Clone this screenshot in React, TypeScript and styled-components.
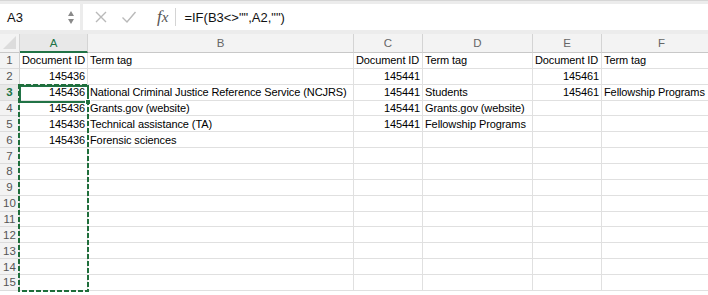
import { FC } from "react"
import styled, { createGlobalStyle } from "styled-components"

const GlobalStyle = createGlobalStyle`
	html, body {
		margin: 0;
		padding: 0;
		background: #fff;
	}
	* {
		box-sizing: border-box;
	}
`

const COLS = ["A", "B", "C", "D", "E", "F"]
const WIDTHS = [68, 266, 69, 110, 69, 120]
const NUM_ROWS = 15

type CellVal = string | number | undefined
const data: CellVal[][] = [
	["Document ID", "Term tag", "Document ID", "Term tag", "Document ID", "Term tag"],
	[145436, undefined, 145441, undefined, 145461, undefined],
	[145436, "National Criminal Justice Reference Service (NCJRS)", 145441, "Students", 145461, "Fellowship Programs"],
	[145436, "Grants.gov (website)", 145441, "Grants.gov (website)"],
	[145436, "Technical assistance (TA)", 145441, "Fellowship Programs"],
	[145436, "Forensic sciences"],
]

const App: FC = () => {
	return (
		<Window>
			<GlobalStyle />
			<FormulaBar>
				<NameBox>
					<span>A3</span>
					<Stepper>
						<Arrow $up />
						<Arrow />
					</Stepper>
				</NameBox>
				<FormulaInput>
					<ToolIcon>
						<svg width="14" height="14" viewBox="0 0 14 14">
							<path d="M2 2 L12 12 M12 2 L2 12" stroke="#b9b9b9" strokeWidth="1.4" fill="none" />
						</svg>
					</ToolIcon>
					<ToolIcon>
						<svg width="16" height="14" viewBox="0 0 16 14">
							<path d="M1.5 7.5 L6 12 L14.5 2" stroke="#b9b9b9" strokeWidth="1.4" fill="none" />
						</svg>
					</ToolIcon>
					<Fx>
						f<span>x</span>
					</Fx>
					<Divider />
					<FormulaText>=IF(B3&lt;&gt;"",A2,"")</FormulaText>
				</FormulaInput>
			</FormulaBar>
			<Sheet>
				<Grid>
					<Corner>
						<CornerTriangle />
					</Corner>
					{COLS.map(c => (
						<ColHeader key={c} $active={c === "A"}>
							{c}
						</ColHeader>
					))}
					{Array.from({ length: NUM_ROWS }).map((_, r) => (
						<Row key={r} r={r} />
					))}
				</Grid>
				<ActiveCell>
					<FillHandle />
				</ActiveCell>
				<Marquee width="71" height="208">
					<rect x="1" y="1" width="69" height="206" fill="none" stroke="#1f6e3b" strokeWidth="2" strokeDasharray="5 2" />
				</Marquee>
			</Sheet>
		</Window>
	)
}

const Row: FC<{ r: number }> = ({ r }) => {
	const vals = data[r] || []
	return (
		<>
			<RowHeader $active={r === 2}>{r + 1}</RowHeader>
			{COLS.map((c, i) => {
				const v = vals[i]
				return (
					<Cell key={c} $num={typeof v === "number"}>
						{v}
					</Cell>
				)
			})}
		</>
	)
}

export default App

const Window = styled.div`
	width: 708px;
	height: 295px;
	overflow: hidden;
	background: #fff;
	font-family: "Liberation Sans", Arial, sans-serif;
`

const FormulaBar = styled.div`
	display: flex;
	height: 34px;
	padding: 3px 0 4px;
	background: #ececec;
	border-top: 1px solid #d6d6d6;
`

const NameBox = styled.div`
	width: 80px;
	background: #fff;
	display: flex;
	align-items: center;
	justify-content: space-between;
	padding: 0 6px 0 7px;
	font-size: 13px;
	color: #111;
`

const Stepper = styled.div`
	display: flex;
	flex-direction: column;
	gap: 3px;
`

const Arrow = styled.div<{ $up?: boolean }>`
	width: 0;
	height: 0;
	border-left: 3.5px solid transparent;
	border-right: 3.5px solid transparent;
	${p => (p.$up ? "border-bottom: 5px solid #8a8a8a;" : "border-top: 5px solid #8a8a8a;")}
`

const FormulaInput = styled.div`
	flex: 1;
	margin-left: 3px;
	background: #fff;
	display: flex;
	align-items: center;
	padding-left: 4px;
`

const ToolIcon = styled.div`
	width: 28px;
	display: flex;
	justify-content: center;
	align-items: center;
`

const Fx = styled.div`
	margin-left: 14px;
	font-family: "Liberation Serif", "Times New Roman", serif;
	font-style: italic;
	font-size: 17px;
	color: #555;
	span {
		font-size: 15px;
	}
`

const Divider = styled.div`
	width: 1px;
	height: 18px;
	background: #d4d4d4;
	margin: 0 8px 0 7px;
`

const FormulaText = styled.div`
	font-size: 13px;
	color: #111;
`

const Sheet = styled.div`
	position: relative;
`

const Grid = styled.div`
	display: grid;
	grid-template-columns: 20px ${WIDTHS.map(w => `${w}px`).join(" ")};
	grid-template-rows: 19px;
	grid-auto-rows: 15.87px;
	width: max-content;
	font-size: 11px;
`

const Corner = styled.div`
	position: relative;
	background: #f3f3f3;
	border-right: 1px solid #d4d4d4;
	border-bottom: 1px solid #c8c8c8;
`

const CornerTriangle = styled.div`
	position: absolute;
	right: 3px;
	bottom: 3px;
	width: 0;
	height: 0;
	border-left: 13px solid transparent;
	border-bottom: 13px solid #dcdcdc;
`

const ColHeader = styled.div<{ $active?: boolean }>`
	display: flex;
	align-items: center;
	justify-content: center;
	font-size: 11.5px;
	background: ${p => (p.$active ? "#e8e8e8" : "#f3f3f3")};
	color: ${p => (p.$active ? "#217346" : "#666")};
	border-right: 1px solid #d4d4d4;
	border-bottom: ${p => (p.$active ? "2px solid #217346" : "1px solid #c8c8c8")};
`

const RowHeader = styled.div<{ $active?: boolean }>`
	display: flex;
	align-items: center;
	justify-content: center;
	font-size: 11.5px;
	background: ${p => (p.$active ? "#e8e8e8" : "#f3f3f3")};
	color: ${p => (p.$active ? "#217346" : "#555")};
	font-weight: ${p => (p.$active ? "bold" : "normal")};
	border-right: 1px solid #d0d0d0;
	border-bottom: 1px solid #dcdcdc;
`

const Cell = styled.div<{ $num?: boolean }>`
	display: flex;
	align-items: center;
	justify-content: ${p => (p.$num ? "flex-end" : "flex-start")};
	padding: 0 2px;
	white-space: nowrap;
	overflow: visible;
	color: #000;
	letter-spacing: -0.1px;
	border-right: 1px solid #e0e0e0;
	border-bottom: 1px solid #e0e0e0;
`

const ActiveCell = styled.div`
	position: absolute;
	left: 19px;
	top: 51px;
	width: 70px;
	height: 18px;
	border: 2px solid #217346;
	pointer-events: none;
`

const FillHandle = styled.div`
	position: absolute;
	right: -4px;
	bottom: -4px;
	width: 6px;
	height: 6px;
	background: #217346;
	border: 1px solid #fff;
`

const Marquee = styled.svg`
	position: absolute;
	left: 18px;
	top: 50px;
	pointer-events: none;
`
